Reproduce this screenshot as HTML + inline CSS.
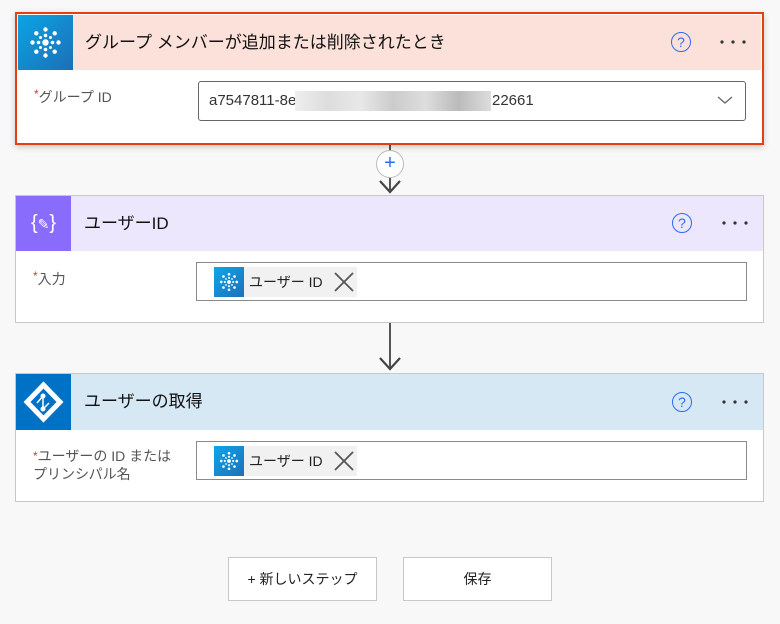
<!DOCTYPE html>
<html><head><meta charset="utf-8"><style>
body{margin:0;width:780px;height:624px;background:#f8f8f8;font-family:"Liberation Sans","Noto Sans CJK JP",sans-serif;position:relative;overflow:hidden;color:#222}
.a{position:absolute}
.card{position:absolute;left:15px;width:749px;background:#fff;border:1px solid #c8c8c8;box-sizing:border-box}
.hdr{position:absolute;left:0;top:0;right:0;height:55px}
.ico{position:absolute;left:0;top:0;width:55px;height:55px}
.title{position:absolute;left:68px;top:0;line-height:55px;font-size:17px;color:#111}
.help{position:absolute;width:18px;height:18px;border:1.5px solid #2b6cf6;border-radius:50%;color:#2b6cf6;font-size:14px;line-height:18px;text-align:center}
.dots{position:absolute}
.lbl{position:absolute;font-size:14px;color:#555}
.lbl b{color:#d13438;font-weight:normal;font-size:12px;vertical-align:top}
.inp{position:absolute;background:#fff;border:1px solid #8a8a8a;box-sizing:border-box}
.tok{position:absolute;left:17px;top:4px;width:143px;height:30px;background:#f1f1f1}
.tok .ti{position:absolute;left:0;top:0;width:30px;height:30px;background:linear-gradient(135deg,#0ea5e9,#1e70b8)}
.tok span{position:absolute;left:35px;top:0;line-height:30px;font-size:14px;color:#222}
.btn{position:absolute;top:557px;width:149px;height:44px;background:#fff;border:1px solid #c8c8c8;box-sizing:border-box;text-align:center;line-height:42px;font-size:14px;color:#222}
</style></head><body>
<svg width="0" height="0" style="position:absolute"><defs>
<g id="dots"><circle cx="0" cy="0" r="3.2" fill="#fff"/><g fill="#fff"><circle cx="0" cy="-7" r="1.8"/><circle cx="0" cy="7" r="1.8"/><circle cx="-7" cy="0" r="1.8"/><circle cx="7" cy="0" r="1.8"/><circle cx="5" cy="-5" r="1.5"/><circle cx="-5" cy="-5" r="1.5"/><circle cx="5" cy="5" r="1.5"/><circle cx="-5" cy="5" r="1.5"/><circle cx="0" cy="-13" r="2.2"/><circle cx="0" cy="13" r="2.2"/><circle cx="-13" cy="0" r="2.2"/><circle cx="13" cy="0" r="2.2"/><circle cx="9.2" cy="-9.2" r="2.2"/><circle cx="-9.2" cy="-9.2" r="2.2"/><circle cx="9.2" cy="9.2" r="2.2"/><circle cx="-9.2" cy="9.2" r="2.2"/></g></g>
<g id="mdots" fill="#333"><circle cx="2" cy="2" r="1.6"/><circle cx="13" cy="2" r="1.6"/><circle cx="24" cy="2" r="1.6"/></g>
</defs></svg>

<div class="a" style="left:389px;top:144px;width:2px;height:46px;background:#555"></div>
<div class="a" style="left:376px;top:150px;width:26px;height:26px;border:1px solid #bbb;border-radius:50%;background:#fff;text-align:center;line-height:25px;color:#2b6cf6;font-size:20px">+</div>
<svg class="a" style="left:378px;top:178px" width="24" height="18"><path d="M2 3 L12 14 L22 3" stroke="#444" stroke-width="2.2" fill="none"/></svg>
<div class="a" style="left:389px;top:322px;width:2px;height:46px;background:#555"></div>
<svg class="a" style="left:378px;top:354px" width="24" height="20"><path d="M2 4 L12 15 L22 4" stroke="#444" stroke-width="2.2" fill="none"/></svg>

<div class="card" style="top:12px;height:133px;border:2px solid #e2400e;box-shadow:0 2px 6px rgba(0,0,0,.2)">
<div class="hdr" style="background:#fbe1d9;left:1px;top:1px;right:1px">
<div class="ico" style="background:linear-gradient(135deg,#0aa4e4,#1d6fb5)"><svg width="55" height="55"><use href="#dots" transform="translate(27.5,27.5)"/></svg></div>
<div class="title" style="left:67px">グループ メンバーが追加または削除されたとき</div>
<div class="help" style="left:653px;top:17px">?</div>
<svg class="dots" style="left:702px;top:25px" width="28" height="5"><use href="#mdots"/></svg>
</div>
<div class="lbl" style="left:17px;top:73px"><b>*</b>グループ ID</div>
<div class="inp" style="left:181px;top:67px;width:548px;height:40px;border-radius:3px;border-color:#666">
<span class="a" style="left:10px;top:10px;font-size:15px;color:#333">a7547811-8e</span>
<div class="a" style="left:96px;top:9px;width:196px;height:20px;background:linear-gradient(90deg,#eee,#ddd,#e8e8e8,#ccc,#ddd,#bbb,#ddd)"></div>
<span class="a" style="left:293px;top:10px;font-size:15px;color:#333">22661</span>
<svg class="a" style="left:518px;top:13px" width="16" height="10"><path d="M1 2 L8 8 L15 2" stroke="#666" stroke-width="1.3" fill="none"/></svg>
</div>
</div>

<div class="card" style="top:195px;height:128px">
<div class="hdr" style="background:#ece7fd">
<div class="ico" style="background:#8a6cfd;color:#fff;font-size:20px;line-height:55px;text-align:center">{<span style="font-size:14px">✎</span>}</div>
<div class="title">ユーザーID</div>
<div class="help" style="left:656px;top:17px">?</div>
<svg class="dots" style="left:706px;top:25px" width="28" height="5"><use href="#mdots"/></svg>
</div>
<div class="lbl" style="left:17px;top:73px"><b>*</b>入力</div>
<div class="inp" style="left:180px;top:66px;width:551px;height:39px">
<div class="tok"><div class="ti"><svg width="30" height="30"><use href="#dots" transform="translate(15,15) scale(0.6)"/></svg></div><span>ユーザー ID</span>
<svg class="a" style="left:120px;top:5px" width="20" height="20"><path d="M1 1 L19 19 M19 1 L1 19" stroke="#555" stroke-width="1.8"/></svg></div>
</div>
</div>

<div class="card" style="top:373px;height:129px">
<div class="hdr" style="background:#d7e8f5;height:56px">
<div class="ico" style="background:#0072c6;height:56px"><svg width="55" height="56"><path d="M27.5 11 L44 28 L27.5 45 L11 28 Z" fill="none" stroke="#fff" stroke-width="5"/><path d="M27 22 V35 M27 22 L21 29 M27 35 L33 29" stroke="#fff" stroke-width="1.5"/><circle cx="27" cy="22" r="2.5" fill="#fff"/><circle cx="27" cy="35" r="2.5" fill="#fff"/></svg></div>
<div class="title">ユーザーの取得</div>
<div class="help" style="left:656px;top:18px">?</div>
<svg class="dots" style="left:706px;top:26px" width="28" height="5"><use href="#mdots"/></svg>
</div>
<div class="lbl" style="left:17px;top:73px;line-height:18px"><b>*</b>ユーザーの ID または<br>プリンシパル名</div>
<div class="inp" style="left:180px;top:67px;width:551px;height:39px">
<div class="tok"><div class="ti"><svg width="30" height="30"><use href="#dots" transform="translate(15,15) scale(0.6)"/></svg></div><span>ユーザー ID</span>
<svg class="a" style="left:120px;top:5px" width="20" height="20"><path d="M1 1 L19 19 M19 1 L1 19" stroke="#555" stroke-width="1.8"/></svg></div>
</div>
</div>

<div class="btn" style="left:228px">+ 新しいステップ</div>
<div class="btn" style="left:403px">保存</div>
</body></html>
